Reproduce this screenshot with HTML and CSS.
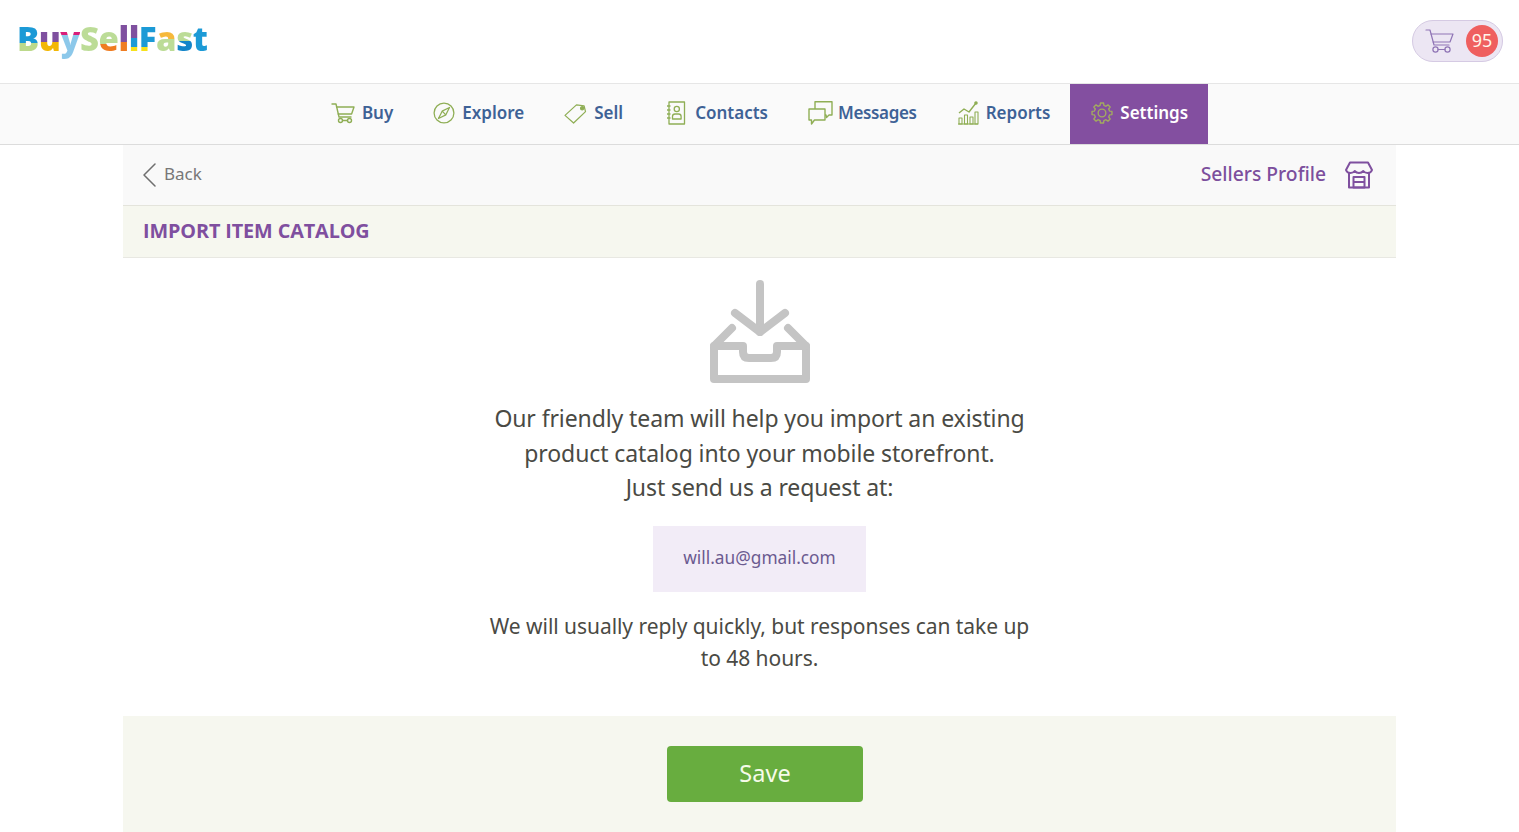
FILE: index.html
```html
<!DOCTYPE html>
<html lang="en">
<head>
    <meta charset="UTF-8">
    <meta name="viewport" content="width=device-width, initial-scale=1.0">
    <title>Import Item Catalog</title>
    <link rel="stylesheet" href="styles.css">
</head>
<body>

<header class="topbar">
    <a class="logo" href="#">
        <span class="l-b">B</span><span class="l-u">u</span><span class="l-y">y</span><span class="l-s">S</span><span class="l-e">e</span><span class="l-l1">l</span><span class="l-l2">l</span><span class="l-f">F</span><span class="l-a">a</span><span class="l-s2">s</span><span class="l-t">t</span>
    </a>
    <a class="cart" href="#">
        <svg class="cart-icon" viewBox="0 0 30 24" width="30" height="24" fill="none" stroke="#8f74b5" stroke-width="1.2" stroke-linecap="round" stroke-linejoin="round">
            <path d="M1 1h4l4 15h15"/>
            <path d="M6 5h22l-3 8H8.2"/>
            <circle cx="10.5" cy="20.5" r="2.6"/>
            <circle cx="22.5" cy="20.5" r="2.6"/>
            <path d="M13 20.5h7"/>
        </svg>
        <span class="cart-count">95</span>
    </a>
</header>

<nav class="mainnav">
    <a class="nav-item" href="#">
        <svg viewBox="0 0 24 22" width="24" height="22" fill="none" stroke="#8fae55" stroke-width="1.4" stroke-linecap="round" stroke-linejoin="round">
            <path d="M1 2h4l3 13h12"/>
            <path d="M5.6 5H23l-2.4 7H7.2"/>
            <circle cx="9.5" cy="18.5" r="2"/>
            <circle cx="18.5" cy="18.5" r="2"/>
            <path d="M11.5 18.5h5"/>
        </svg>
        Buy
    </a>
    <a class="nav-item" href="#">
        <svg viewBox="0 0 24 24" width="22" height="22" fill="none" stroke="#8fae55" stroke-width="1.4" stroke-linejoin="round">
            <circle cx="12" cy="12" r="10.8"/>
            <path d="M18 6l-8 4-4 8 8-4z"/>
            <path d="M10 10l4 4"/>
        </svg>
        Explore
    </a>
    <a class="nav-item" href="#">
        <svg viewBox="0 0 24 22" width="23" height="21" fill="none" stroke="#8fae55" stroke-width="1.3" stroke-linejoin="round">
            <path d="M1 13L13 2l8 1 1.500 6L10 21z"/>
            <circle cx="19" cy="5.500" r="1.700" fill="#8fae55"/>
        </svg>
        Sell
    </a>
    <a class="nav-item nav-item-wide" href="#">
        <svg viewBox="0 0 20 24" width="20" height="24" fill="none" stroke="#8fae55" stroke-width="1.3" stroke-linejoin="round">
            <rect x="3" y="1" width="15.500" height="22"/>
            <path d="M1 5h3.500M1 9h3.500M1 13h3.500M1 17h3.500"/>
            <circle cx="10.800" cy="8" r="2.600"/>
            <path d="M6.500 18v-2.500q0-2.500 2.500-2.500h3.600q2.500 0 2.500 2.500V18z"/>
        </svg>
        Contacts
    </a>
    <a class="nav-item nav-item-tight" href="#">
        <svg viewBox="0 0 25 24" width="25" height="24" fill="none" stroke="#8fae55" stroke-width="1.4" stroke-linejoin="round">
            <path d="M7 8V.8h17V14h-3l-2.500 2.500L18 14h-1"/>
            <path d="M1 8h16v11H6.500L3.500 23v-4H1z"/>
        </svg>
        Messages
    </a>
    <a class="nav-item" href="#">
        <svg viewBox="0 0 22 24" width="22" height="24" fill="none" stroke="#8fae55" stroke-width="1.100" stroke-linejoin="round">
            <path d="M1 23h20"/>
            <path d="M2 23v-6h3v6zM7.500 23v-9h3v9zM13 23v-7h3v7zM18 23V11h3v12z"/>
            <path d="M2 12l5-4 5 3 7-9" stroke-width="1.400"/>
            <circle cx="19" cy="2" r="1.200" fill="#8fae55"/>
        </svg>
        Reports
    </a>
    <a class="nav-item active" href="#">
        <svg viewBox="0 0 24 24" width="22" height="22" fill="none" stroke="#a3ab5f" stroke-width="1.500" stroke-linejoin="round">
            <circle cx="12" cy="12" r="4.200"/>
            <path d="M9.940 3.750L10.280 1.140H13.720L14.060 3.750L16.380 4.710L18.470 3.100L20.900 5.530L19.290 7.620L20.250 9.940L22.860 10.280V13.720L20.250 14.060L19.290 16.380L20.900 18.470L18.470 20.900L16.380 19.290L14.060 20.250L13.720 22.860H10.280L9.940 20.250L7.620 19.290L5.530 20.900L3.100 18.470L4.710 16.380L3.750 14.060L1.140 13.720V10.280L3.750 9.940L4.710 7.620L3.100 5.530L5.530 3.100L7.620 4.710z"/>
        </svg>
        Settings
    </a>
</nav>

<div class="page">
    <div class="subbar">
        <a class="back" href="#">
            <svg viewBox="0 0 14 24" width="14" height="24" fill="none" stroke="#6f6f6f" stroke-width="1.500" stroke-linecap="round" stroke-linejoin="round">
                <path d="M12 1L1 12l11 11"/>
            </svg>
            Back
        </a>
        <a class="sellers" href="#">
            <span class="sellers-label">Sellers Profile</span>
            <svg viewBox="0 0 28 28" width="28" height="28" fill="none" stroke="#7f509f" stroke-width="2" stroke-linejoin="round">
                <path d="M5 1.500h18l4 7.500q-1 3-4.300 3-2.800 0-4.400-2-1.700 2-4.300 2t-4.300-2q-1.600 2-4.400 2Q2 12 1 9z"/>
                <path d="M4 12v14.500h20V12"/>
                <path d="M8.500 16h11v10.500h-11z"/>
                <path d="M8.500 21h11"/>
            </svg>
        </a>
    </div>

    <h1 class="page-title">IMPORT ITEM CATALOG</h1>

    <main class="content">
        <svg class="import-icon" viewBox="0 0 100 104" width="100" height="104" fill="none" stroke="#c4c4c4" stroke-width="8" stroke-linecap="round" stroke-linejoin="round">
            <path d="M50 4v48"/>
            <path d="M25 33l25 19 25-19"/>
            <path d="M22 48L4 66v33h92V66L78 48"/>
            <path d="M4 66h29v6q0 6 6 6h22q6 0 6-6v-6h29"/>
        </svg>
        <p class="lead">Our friendly team will help you import an existing<br>product catalog into your mobile storefront.<br>Just send us a request at:</p>
        <a class="email" href="#">will.au@gmail.com</a>
        <p class="note">We will usually reply quickly, but responses can take up<br>to 48 hours.</p>
    </main>

    <footer class="actions">
        <button class="save" type="button">Save</button>
    </footer>
</div>

</body>
</html>
```

FILE: styles.css
```css
html, body {
    height: 100%;
}
body {
    font-family: "Noto Sans", "Open Sans", sans-serif;
    background-color: #fff;
    color: #4a4a44;
    margin: 0;
    overflow: hidden;
}
a {
    text-decoration: none;
}
svg {
    flex: none;
}

.topbar {
    height: 81px;
    display: flex;
    align-items: center;
    justify-content: space-between;
    padding: 0 16px 2px 17px;
    border-bottom: 1px solid #e6e6e6;
}
.logo {
    font-family: "Open Sans", sans-serif;
    font-size: 33px;
    font-weight: 800;
    letter-spacing: -0.5px;
    line-height: 44px;
    margin-top: -4px;
}
.logo span {
    color: transparent;
    -webkit-background-clip: text;
    background-clip: text;
}
.l-b { background-image: linear-gradient(#1c9ad6 60%, #bcd98b 60%); }
.l-u { background-image: linear-gradient(#7f509f 58%, #f2b705 58%); }
.l-y { background-image: linear-gradient(#d81e7a 42%, #8cc8ea 42%); }
.l-s { background-image: linear-gradient(#d81e7a 22%, #bcdc97 22%); }
.l-e { background-image: linear-gradient(#bcdc97 62%, #ef7d22 62%); }
.l-l1 { background-image: linear-gradient(#7f509f 58%, #ef7d22 58%); }
.l-l2 { background-image: linear-gradient(#7f509f 50%, #1c9ad6 50%, #1c9ad6 70%, #f6e11c 70%); }
.l-f { background-image: linear-gradient(#1c9ad6 70%, #f6e11c 70%); }
.l-a { background-image: linear-gradient(#f6b93b 52%, #bcdc97 52%); }
.l-s2 { background-image: linear-gradient(#bcdc97 55%, #1285c9 55%); }
.l-t { background-image: linear-gradient(#1c9ad6 100%, #1c9ad6 100%); }

.cart {
    display: flex;
    align-items: center;
    justify-content: space-between;
    box-sizing: border-box;
    width: 91px;
    height: 42px;
    padding: 0 4px 0 12px;
    background: #ece6f3;
    border: 1px solid #d5cae3;
    border-radius: 21px;
}
.cart-count {
    width: 32px;
    height: 32px;
    border-radius: 50%;
    background: #ef5f5f;
    color: #fff5ea;
    font-size: 18px;
    line-height: 30px;
    text-align: center;
}

.mainnav {
    height: 60px;
    display: flex;
    justify-content: center;
    background: #fafafa;
    border-bottom: 1px solid #dcdcdc;
}
.nav-item {
    display: flex;
    align-items: center;
    gap: 7px;
    padding: 0 20px 4px;
    color: #3e6296;
    font-size: 17px;
    font-weight: 600;
}
.nav-item svg {
    margin-top: 2px;
}
.nav-item-wide {
    gap: 9px;
    margin-left: 3px;
}
.nav-item-tight {
    gap: 5px;
    letter-spacing: -0.35px;
}
.nav-item.active {
    background: #834fa0;
    color: #fff;
    padding-left: 21px;
}

.page {
    width: 1273px;
    margin: 0 auto;
}
.subbar {
    height: 60px;
    display: flex;
    align-items: center;
    justify-content: space-between;
    padding: 0 23px 0 20px;
    background: #f9f9f9;
    border-bottom: 1px solid #e4e4dc;
}
.back {
    display: flex;
    align-items: center;
    gap: 7px;
    color: #777;
    font-size: 17px;
    padding-bottom: 3px;
}
.back svg {
    margin-top: 3px;
}
.sellers {
    display: flex;
    align-items: center;
    gap: 19px;
    color: #7c4f9d;
    font-size: 19.3px;
    font-weight: 500;
}
.sellers-label {
    padding-bottom: 3px;
}
.page-title {
    margin: 0;
    height: 52px;
    box-sizing: border-box;
    padding-left: 20px;
    background: #f6f7ef;
    border-bottom: 1px solid #e8e8e2;
    color: #7f4f9f;
    font-family: "Open Sans", sans-serif;
    font-size: 19.8px;
    font-weight: 700;
    letter-spacing: -0.1px;
    line-height: 50px;
}

.content {
    height: 458px;
    display: flex;
    flex-direction: column;
    align-items: center;
    text-align: center;
    box-sizing: border-box;
    padding-top: 22px;
}
.lead {
    margin: 17px 0 0;
    font-size: 23px;
    letter-spacing: -0.1px;
    line-height: 34.5px;
}
.email {
    margin-top: 21px;
    width: 213px;
    height: 66px;
    background: #f2ecf7;
    color: #6b5a90;
    font-size: 17.3px;
    line-height: 64px;
}
.note {
    margin: 18px 0 0;
    font-size: 21px;
    letter-spacing: -0.05px;
    line-height: 32px;
}

.actions {
    height: 116px;
    display: flex;
    justify-content: center;
    padding: 30px 0 0 11px;
    box-sizing: border-box;
    background: #f6f7ef;
}
.save {
    width: 196px;
    height: 56px;
    border: none;
    border-radius: 4px;
    background: #68ad3f;
    color: #f6fbe9;
    font-family: inherit;
    font-size: 23.5px;
    padding-bottom: 4px;
    cursor: pointer;
}
```
